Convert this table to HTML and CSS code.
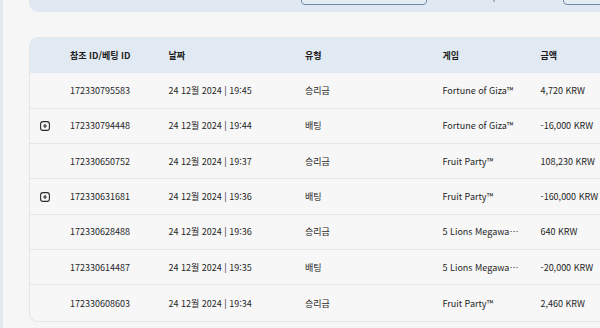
FILE: index.html
```html
<!DOCTYPE html>
<html lang="ko">
<head>
<meta charset="utf-8">
<link rel="stylesheet" href="styles.css">
</head>
<body>
<div class="page">
  <div class="filters">
    <div class="field field-a"></div>
    <span class="sep"></span>
    <div class="field field-b"></div>
  </div>
  <div class="card">
    <div class="row head">
      <div class="cell"></div>
      <div class="cell">참조 ID/베팅 ID</div>
      <div class="cell">날짜</div>
      <div class="cell">유형</div>
      <div class="cell">게임</div>
      <div class="cell">금액</div>
    </div>
    <div class="row">
      <div class="cell"></div>
      <div class="cell">172330795583</div>
      <div class="cell">24 12월 2024 | 19:45</div>
      <div class="cell">승리금</div>
      <div class="cell">Fortune of Giza™</div>
      <div class="cell">4,720 KRW</div>
    </div>
    <div class="row">
      <div class="cell"><svg class="plus" viewBox="0 0 10 10" width="10" height="10"><rect x="0.6" y="0.6" width="8.8" height="8.8" rx="2.4" fill="none" stroke="#2b2b2b" stroke-width="1.1"/><path d="M5 3.1v3.8M3.1 5h3.8" stroke="#2b2b2b" stroke-width="1.1"/></svg></div>
      <div class="cell">172330794448</div>
      <div class="cell">24 12월 2024 | 19:44</div>
      <div class="cell">배팅</div>
      <div class="cell">Fortune of Giza™</div>
      <div class="cell">-16,000 KRW</div>
    </div>
    <div class="row">
      <div class="cell"></div>
      <div class="cell">172330650752</div>
      <div class="cell">24 12월 2024 | 19:37</div>
      <div class="cell">승리금</div>
      <div class="cell">Fruit Party™</div>
      <div class="cell">108,230 KRW</div>
    </div>
    <div class="row">
      <div class="cell"><svg class="plus" viewBox="0 0 10 10" width="10" height="10"><rect x="0.6" y="0.6" width="8.8" height="8.8" rx="2.4" fill="none" stroke="#2b2b2b" stroke-width="1.1"/><path d="M5 3.1v3.8M3.1 5h3.8" stroke="#2b2b2b" stroke-width="1.1"/></svg></div>
      <div class="cell">172330631681</div>
      <div class="cell">24 12월 2024 | 19:36</div>
      <div class="cell">배팅</div>
      <div class="cell">Fruit Party™</div>
      <div class="cell">-160,000 KRW</div>
    </div>
    <div class="row">
      <div class="cell"></div>
      <div class="cell">172330628488</div>
      <div class="cell">24 12월 2024 | 19:36</div>
      <div class="cell">승리금</div>
      <div class="cell">5 Lions Megawa⋯</div>
      <div class="cell">640 KRW</div>
    </div>
    <div class="row">
      <div class="cell"></div>
      <div class="cell">172330614487</div>
      <div class="cell">24 12월 2024 | 19:35</div>
      <div class="cell">배팅</div>
      <div class="cell">5 Lions Megawa⋯</div>
      <div class="cell">-20,000 KRW</div>
    </div>
    <div class="row last">
      <div class="cell"></div>
      <div class="cell">172330608603</div>
      <div class="cell">24 12월 2024 | 19:34</div>
      <div class="cell">승리금</div>
      <div class="cell">Fruit Party™</div>
      <div class="cell">2,460 KRW</div>
    </div>
  </div>
</div>
</body>
</html>
```
FILE: styles.css
```css
html, body {
  margin: 0;
  padding: 0;
  height: 100%;
  overflow: hidden;
}
body {
  background: #f6f6f7;
  font-family: "Noto Sans CJK KR", "Noto Sans", sans-serif;
  font-size: 9px;
  color: #262626;
}
.page {
  border-left: 3px solid #e2e9f0;
  padding-left: 26px;
  height: 100%;
  box-sizing: border-box;
}
.filters {
  height: 12px;
  background: #e0e9f1;
  border-bottom-left-radius: 9px;
  display: flex;
  align-items: flex-end;
  overflow: hidden;
  width: 620px;
}
.field {
  height: 20px;
  border: 1px solid #6f8cab;
  border-radius: 4px;
  box-sizing: border-box;
  margin-bottom: 7px;
  background: #e4ecf3;
}
.field-a {
  margin-left: 272px;
  width: 126px;
}
.sep {
  width: 2px;
  height: 2px;
  background: #a9b3bd;
  margin-left: 66px;
  margin-bottom: 10px;
}
.field-b {
  margin-left: 68px;
  width: 80px;
}
.card {
  margin-top: 25px;
  width: 640px;
  border: 1px solid #e3e5e8;
  border-radius: 9px;
  overflow: hidden;
  background: #f7f7f7;
}
.row {
  display: grid;
  grid-template-columns: 40px 98.5px 136.5px 137.5px 98px 1fr;
  height: 35.35px;
  align-items: center;
  border-bottom: 1px solid #e6e6e7;
  box-sizing: border-box;
}
.row.last {
  border-bottom: none;
}
.head {
  background: #e1eaf2;
  font-weight: 700;
  color: #1c1c1c;
  border-bottom: none;
  height: 35.4px;
}
.cell {
  white-space: nowrap;
}
.cell:first-child {
  padding-left: 9.5px;
  display: flex;
  align-items: center;
}
.plus {
  display: block;
}
```
